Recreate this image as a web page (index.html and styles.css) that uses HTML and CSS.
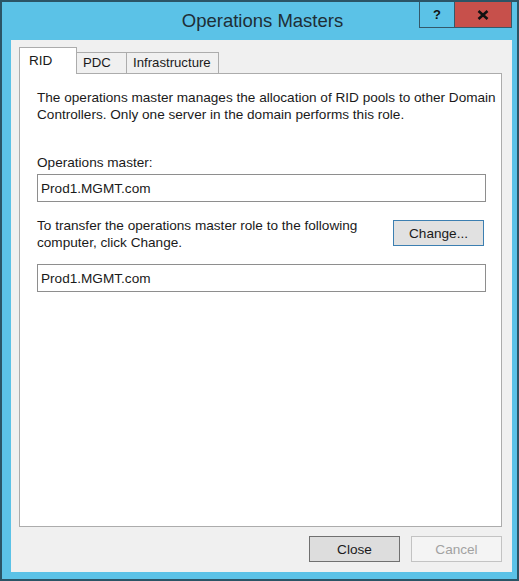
FILE: index.html
```html
<!DOCTYPE html>
<html>
<head>
<meta charset="utf-8">
<title>Operations Masters</title>
<link rel="stylesheet" href="styles.css">
</head>
<body>
<div class="window">
  <div class="titlebar">
    <div class="title">Operations Masters</div>
    <div class="caption-buttons">
      <div class="cap-btn help">?</div>
      <div class="cap-btn close">
        <svg width="12" height="10" viewBox="0 0 12 10"><path d="M1.5 1 L10.5 9 M10.5 1 L1.5 9" stroke="#111" stroke-width="2.6" fill="none"/></svg>
      </div>
    </div>
  </div>
  <div class="client">
    <div class="tabs">
      <div class="tab selected">RID</div>
      <div class="tab">PDC</div>
      <div class="tab">Infrastructure</div>
    </div>
    <div class="panel">
      <p class="desc">The operations master manages the allocation of RID pools to other Domain<br>Controllers. Only one server in the domain performs this role.</p>
      <div class="label">Operations master:</div>
      <div class="field">Prod1.MGMT.com</div>
      <div class="transfer">
        <div class="transfer-text">To transfer the operations master role to the following<br>computer, click Change.</div>
        <div class="btn change">Change...</div>
      </div>
      <div class="field second">Prod1.MGMT.com</div>
    </div>
    <div class="buttons">
      <div class="btn close-btn">Close</div>
      <div class="btn cancel">Cancel</div>
    </div>
  </div>
</div>
</body>
</html>
```
FILE: styles.css
```css
html, body {
  margin: 0;
  padding: 0;
  background: #ffffff;
}
body {
  font-family: "Liberation Sans", Arial, sans-serif;
  color: #1a1a1a;
}
.window {
  width: 519px;
  height: 581px;
  box-sizing: border-box;
  background: #5bc2e7;
  border: 2px solid #2b5466;
  display: flex;
  flex-direction: column;
  position: relative;
}
.titlebar {
  height: 38px;
  flex: none;
  display: flex;
  align-items: center;
  justify-content: center;
}
.title {
  font-size: 18.5px;
  color: #1e2e36;
  margin-left: 6px;
  margin-top: -1px;
}
.caption-buttons {
  position: absolute;
  top: 0;
  right: 5px;
  display: flex;
  height: 26px;
}
.cap-btn {
  box-sizing: border-box;
  height: 26px;
  display: flex;
  align-items: center;
  justify-content: center;
  border: 1px solid #34596b;
  border-top: none;
}
.help {
  width: 36px;
  background: #5bc2e7;
  font-weight: bold;
  font-size: 13px;
  color: #111;
}
.close {
  width: 57px;
  background: #c7504b;
  border-left: none;
}
.client {
  flex: 1;
  margin: 0 5px 7px 9px;
  background: #f0f0f0;
  display: flex;
  flex-direction: column;
  padding: 8px 10px 10px 8px;
  box-sizing: border-box;
}
.tabs {
  height: 25px;
  display: flex;
  align-items: flex-end;
  flex: none;
  position: relative;
  z-index: 2;
}
.tab {
  box-sizing: border-box;
  height: 21px;
  border: 1px solid #acacac;
  border-bottom: none;
  background: #f0f0f0;
  font-size: 13.2px;
  padding: 2px 6px 0 6px;
  margin-left: -1px;
}
.tab:nth-child(2) {
  width: 51px;
}
.tab:nth-child(3) {
  width: 93px;
}
.tab.selected {
  height: 27px;
  margin-left: 0;
  margin-bottom: -1px;
  width: 58px;
  background: #ffffff;
  padding: 5px 9px 0 9px;
  font-size: 13.6px;
}
.panel {
  flex: 1;
  background: #ffffff;
  border: 1px solid #acacac;
  padding: 15px 15px 0 17px;
  position: relative;
  z-index: 1;
  font-size: 13.6px;
}
.desc {
  margin: 0;
  line-height: 17px;
  white-space: nowrap;
}
.label {
  margin-top: 31px;
  line-height: 17px;
}
.field {
  box-sizing: border-box;
  height: 28px;
  margin-top: 3px;
  border: 1px solid #8e8e8e;
  padding-left: 3px;
  display: flex;
  align-items: center;
  background: #fff;
}
.field.second {
  margin-top: 13px;
}
.transfer {
  margin-top: 15px;
  display: flex;
  justify-content: space-between;
  align-items: flex-start;
}
.transfer-text {
  line-height: 17px;
  white-space: nowrap;
}
.btn {
  box-sizing: border-box;
  width: 91px;
  height: 26px;
  display: flex;
  align-items: center;
  justify-content: center;
  font-size: 13.6px;
}
.change {
  margin-top: 3px;
  margin-right: 2px;
  background: #e1e1e1;
  border: 1px solid #3c7fb1;
}
.buttons {
  flex: none;
  margin-top: 9px;
  display: flex;
  justify-content: flex-end;
  gap: 11px;
}
.close-btn {
  background: #dddddd;
  border: 1px solid #707070;
}
.cancel {
  background: #f4f4f4;
  border: 1px solid #c3c3c3;
  color: #a2a2a2;
}
```
